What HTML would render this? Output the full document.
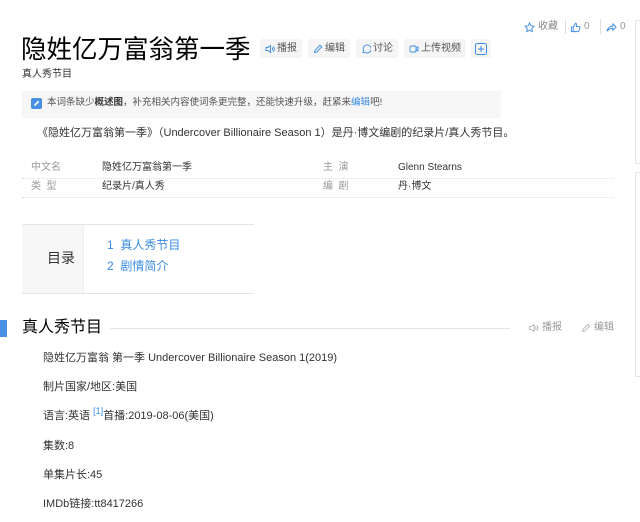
<!DOCTYPE html>
<html><head><meta charset="utf-8"><style>
*{margin:0;padding:0;box-sizing:border-box}
body{width:640px;height:522px;background:#fff;font-family:"Liberation Sans","Noto Sans CJK SC",sans-serif;color:#333;position:relative;overflow:hidden;font-size:12px}
.a{position:absolute;white-space:nowrap;line-height:1.2}
.btn{position:absolute;top:39px;height:19px;background:#f5f5f5;border-radius:2px;font-size:10px;color:#555;line-height:19px;padding:0 5px;display:flex;align-items:center;gap:2px}
.btn svg{flex:none}
.g{color:#999;font-size:10px;display:flex;align-items:center;gap:3px}
.dot{position:absolute;left:22px;width:592px;border-top:1px dotted #ddd}
.p{position:absolute;left:43px;font-size:11px;color:#333;line-height:14px}
.r{position:absolute;font-size:10px;line-height:12px}
</style></head><body>
<div class="a g" style="left:524px;top:21px;color:#888"><svg width="11" height="11" viewBox="0 0 12 12"><path d="M6 1l1.5 3.2 3.5.4-2.6 2.4.7 3.5L6 8.8 2.9 10.5l.7-3.5L1 4.6l3.5-.4z" fill="none" stroke="#3b8ce3"/></svg>收藏</div>
<div class="a" style="left:565px;top:19px;width:1px;height:15px;background:#ddd"></div>
<div class="a g" style="left:570px;top:21px"><svg width="11" height="11" viewBox="0 0 12 12"><path d="M1.5 5.5h2v5h-2zM3.5 5.5L6 1.5c1 0 1.3.7 1 2L6.7 5h3.3c.8 0 1 .6.8 1.2l-1.2 3.8c-.2.4-.5.5-1 .5H3.5" fill="none" stroke="#3b8ce3"/></svg>0</div>
<div class="a" style="left:600px;top:19px;width:1px;height:15px;background:#ddd"></div>
<div class="a g" style="left:606px;top:21px"><svg width="11" height="11" viewBox="0 0 12 12"><path d="M1 10c1-4 4-5.5 6.5-5.5V2L11 5.5 7.5 9V6.8C5 6.8 3 7.8 1 10z" fill="none" stroke="#3b8ce3"/></svg>0</div>
<div class="a" style="left:635px;top:20px;width:6px;height:144px;border:1px solid #e5e5e5"></div>
<div class="a" style="left:635px;top:172px;width:6px;height:205px;border:1px solid #e5e5e5"></div>

<div class="a" style="left:21px;top:34px;font-size:25.5px;color:#000;line-height:32px">隐姓亿万富翁第一季</div>
<div class="btn" style="left:260px"><svg width="10" height="10" viewBox="0 0 10 10"><path d="M1 3.5h2L5.5 1.5v7L3 6.5H1z M7 3.5q1 1.5 0 3 M8.3 2.3q2 2.7 0 5.4" fill="none" stroke="#3b8ce3" stroke-width=".9"/></svg>播报</div>
<div class="btn" style="left:308px"><svg width="10" height="10" viewBox="0 0 10 10"><path d="M1.5 8.5l.5-2.2L7 1.3l1.7 1.7-5 5z" fill="none" stroke="#3b8ce3" stroke-width=".9"/></svg>编辑</div>
<div class="btn" style="left:356px"><svg width="10" height="10" viewBox="0 0 10 10"><path d="M2 8.5l.6-1.8A4 4 0 1 1 4 8.3z" fill="none" stroke="#3b8ce3" stroke-width=".9"/></svg>讨论</div>
<div class="btn" style="left:404px"><svg width="10" height="10" viewBox="0 0 10 10"><rect x="1" y="2" width="6" height="6" rx="1" fill="none" stroke="#3b8ce3" stroke-width=".9"/><path d="M7 4.5l2-1.5v4L7 5.5" fill="none" stroke="#3b8ce3" stroke-width=".9"/></svg>上传视频</div>
<div class="btn" style="left:471px;width:20px;padding:0;justify-content:center"><svg width="12" height="12" viewBox="0 0 12 12"><rect x=".5" y=".5" width="11" height="11" rx="2" fill="none" stroke="#3b8ce3"/><path d="M6 3v6M3 6h6" stroke="#3b8ce3"/></svg></div>
<div class="a" style="left:22px;top:69px;font-size:10px;color:#333">真人秀节目</div>

<div class="a" style="left:22px;top:91px;width:479px;height:27px;background:#f6f6f6"></div>
<div class="a" style="left:31px;top:98px;width:11px;height:11px;background:#4a90e2;border-radius:2px"><svg width="11" height="11" viewBox="0 0 11 11"><path d="M3 8l.4-1.6L7 2.8l1.2 1.2L4.6 7.6z" fill="#fff"/></svg></div>
<div class="a" style="left:47px;top:97px;font-size:9.5px;color:#555">本词条缺少<b style="color:#333">概述图</b>，补充相关内容使词条更完整，还能快速升级，赶紧来<span style="color:#3b8ce3">编辑</span>吧!</div>

<div class="a" style="left:37px;top:127px;font-size:11px;color:#333">《隐姓亿万富翁第一季》（Undercover Billionaire Season 1）是丹·博文编剧的纪录片/真人秀节目。</div>

<div class="r" style="left:31px;top:162px;color:#999">中文名</div>
<div class="r" style="left:102px;top:162px;color:#333">隐姓亿万富翁第一季</div>
<div class="r" style="left:323px;top:162px;color:#999">主&nbsp;&nbsp;演</div>
<div class="r" style="left:398px;top:162px;color:#333">Glenn Stearns</div>
<div class="dot" style="top:178px"></div>
<div class="r" style="left:31px;top:181px;color:#999">类&nbsp;&nbsp;型</div>
<div class="r" style="left:102px;top:181px;color:#333">纪录片/真人秀</div>
<div class="r" style="left:323px;top:181px;color:#999">编&nbsp;&nbsp;剧</div>
<div class="r" style="left:398px;top:181px;color:#333">丹·博文</div>
<div class="dot" style="top:197px"></div>

<div class="a" style="left:22px;top:224px;width:232px;height:70px;border-top:1px solid #e5e5e5;border-bottom:1px solid #e5e5e5"></div>
<div class="a" style="left:22px;top:225px;width:62px;height:68px;background:#f7f7f7;border-right:1px solid #eee"></div>
<div class="a" style="left:47px;top:250px;font-size:14px;color:#333">目录</div>
<div class="a" style="left:107px;top:238px;font-size:12px;color:#3b8ce3">1&nbsp; 真人秀节目</div>
<div class="a" style="left:107px;top:259px;font-size:12px;color:#3b8ce3">2&nbsp; 剧情简介</div>

<div class="a" style="left:0;top:320px;width:7px;height:17px;background:#4a90e2"></div>
<div class="a" style="left:22px;top:318px;font-size:16px;color:#000">真人秀节目</div>
<div class="a" style="left:110px;top:328px;width:400px;height:1px;background:#e5e5e5"></div>
<div class="a g" style="left:528px;top:322px"><svg width="11" height="10" viewBox="0 0 10 10"><path d="M1 3.5h2L5.5 1.5v7L3 6.5H1z M7 3.5q1 1.5 0 3 M8.3 2.3q2 2.7 0 5.4" fill="none" stroke="#aaa" stroke-width=".8"/></svg>播报</div>
<div class="a g" style="left:581px;top:322px"><svg width="10" height="10" viewBox="0 0 10 10"><path d="M1.5 8.5l.5-2.2L7 1.3l1.7 1.7-5 5z" fill="none" stroke="#aaa" stroke-width=".8"/></svg>编辑</div>

<div class="p" style="top:351px">隐姓亿万富翁 第一季 Undercover Billionaire Season 1(2019)</div>
<div class="p" style="top:380px">制片国家/地区:美国</div>
<div class="p" style="top:409px">语言:英语 <span style="color:#3b8ce3;font-size:9px;position:relative;top:-5px">[1]</span>首播:2019-08-06(美国)</div>
<div class="p" style="top:439px">集数:8</div>
<div class="p" style="top:468px">单集片长:45</div>
<div class="p" style="top:497px">IMDb链接:tt8417266</div>
</body></html>
